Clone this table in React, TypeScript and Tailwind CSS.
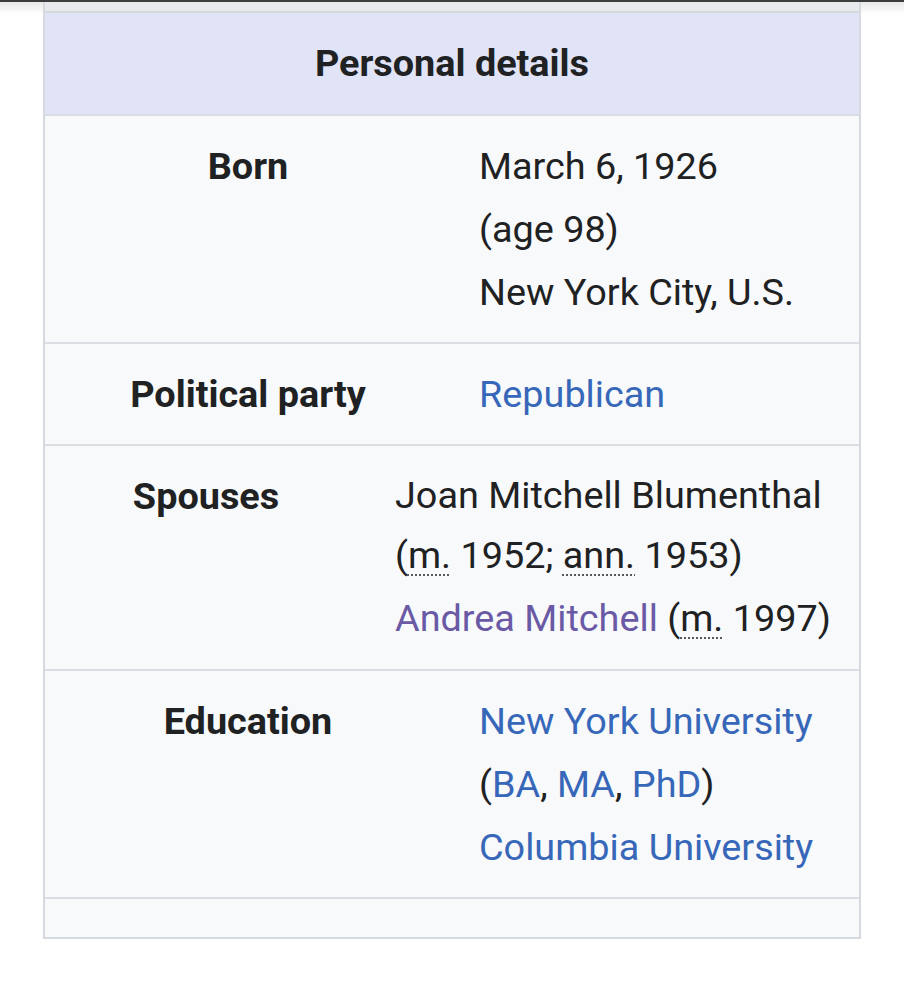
import React from "react";

const link = "text-[#3767b9]";
const visited = "text-[#6a5aa6]";

function Abbr({ children }: { children: React.ReactNode }) {
  return (
    <span className="underline decoration-dotted decoration-[1.5px] underline-offset-[6px] decoration-[#54595d]">
      {children}
    </span>
  );
}

function Row({
  label,
  labelWidth,
  children,
}: {
  label: string;
  labelWidth: string;
  children: React.ReactNode;
}) {
  return (
    <div className="flex border-t-2 border-[#dadde3] pt-[19px] pb-[18px]">
      <div className={`${labelWidth} shrink-0 text-center font-bold`}>{label}</div>
      <div className="pl-[28px] pr-2">{children}</div>
    </div>
  );
}

export default function App() {
  return (
    <div
      className="relative min-h-[1000px] bg-white text-[#202122] text-[37.8px] leading-[63px]"
      style={{ fontFamily: "Roboto, 'Noto Sans', sans-serif" }}
    >
      {/* top edge + shadow */}
      <div className="h-[2px] bg-[#3c3c3c]" />
      <div className="h-[12px] bg-gradient-to-b from-[#e9e9ea] to-white" />

      <div className="-mt-[12px] mx-[43px] border-x-2 border-b-2 border-[#d6d9de]">
        <div className="h-[9px] bg-[#e8e9ec]" />
        <div className="border-t-2 border-[#d6d9de] bg-[#e1e3f6] h-[103px] flex items-center justify-center font-bold">
          Personal details
        </div>
        <div className="bg-[#f8f9fa]">
          <Row label="Born" labelWidth="w-[406px]">
            <div>March 6, 1926</div>
            <div>(age 98)</div>
            <div>New York City, U.S.</div>
          </Row>
          <Row label="Political party" labelWidth="w-[406px]">
            <div className={link}>Republican</div>
          </Row>
          <Row label="Spouses" labelWidth="w-[322px]">
            <div className="leading-[60px]">Joan Mitchell Blumenthal</div>
            <div className="leading-[60px]">
              (<Abbr>m.</Abbr> 1952; <Abbr>ann.</Abbr> 1953)
            </div>
            <div className="leading-[66px]">
              <span className={visited}>Andrea Mitchell</span> (<Abbr>m.</Abbr> 1997)
            </div>
          </Row>
          <Row label="Education" labelWidth="w-[406px]">
            <div className={link}>New York University</div>
            <div>
              (<span className={link}>BA</span>, <span className={link}>MA</span>,{" "}
              <span className={link}>PhD</span>)
            </div>
            <div className={link}>Columbia University</div>
          </Row>
          <div className="h-[40px] border-t-2 border-[#dadde3]" />
        </div>
      </div>
    </div>
  );
}
